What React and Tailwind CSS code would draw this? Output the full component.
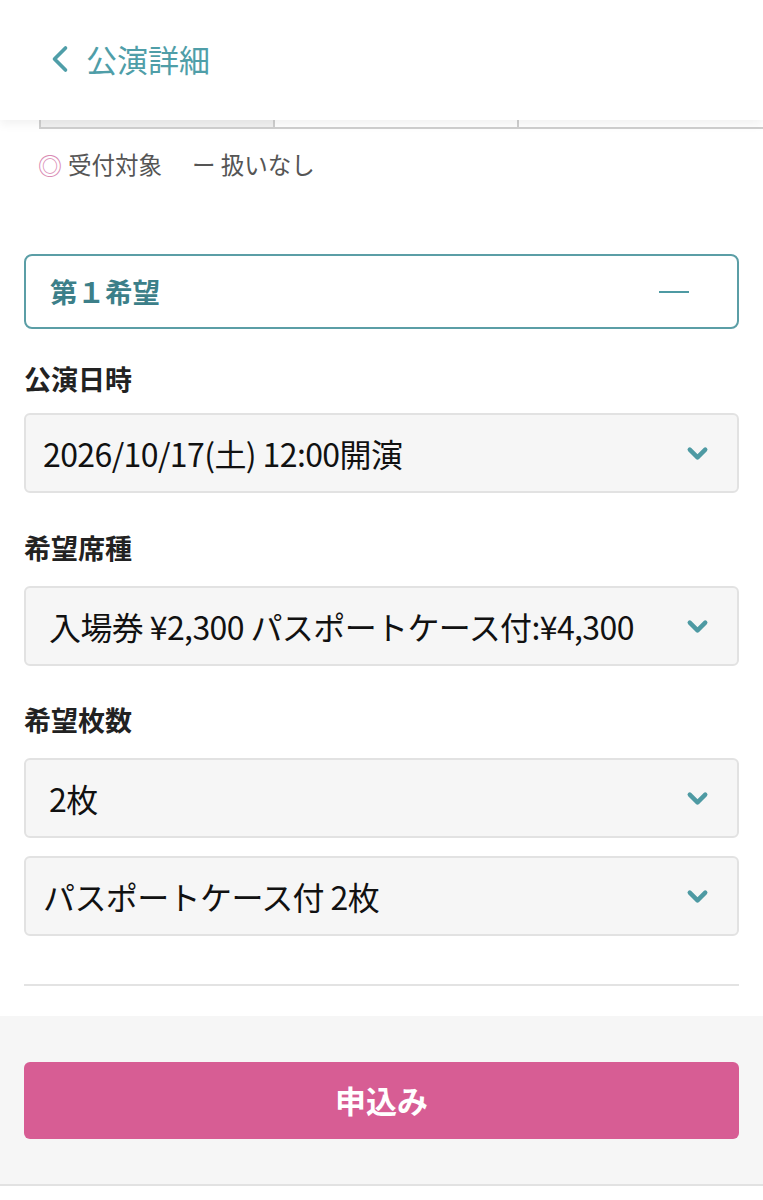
import { ChevronLeft, ChevronDown } from "lucide-react";

const font = { fontFamily: '"Noto Sans CJK JP", "Noto Sans", sans-serif' };

function Select({ value, pad = "pl-[17px]" }) {
  return (
    <div className={`h-[80px] rounded-md border-2 border-[#e2e2e2] bg-[#f6f6f6] flex items-center justify-between ${pad} pr-[24px]`}>
      <span className="text-[32px] text-[#111] tracking-[-0.6px]">{value}</span>
      <ChevronDown size={31} strokeWidth={3.4} className="text-[#4e9aa3]" />
    </div>
  );
}

function Label({ children }) {
  return <div className="text-[27px] font-bold text-[#222] leading-none">{children}</div>;
}

export default function App() {
  return (
    <div className="min-h-[1200px] bg-white" style={font}>
      {/* header */}
      <div className="relative z-10 h-[120px] bg-white shadow-[0_4px_10px_rgba(0,0,0,0.06)] flex items-center pl-[38px] pb-[2px]">
        <ChevronLeft size={44} strokeWidth={2} className="text-[#4f9ea8]" />
        <span className="ml-[4px] text-[31px] text-[#4f9ea8]">公演詳細</span>
      </div>

      {/* tail of the table above */}
      <div className="ml-[39px] h-[9px] grid grid-cols-[234px_244px_1fr] border-l-2 border-b-2 border-[#cfcfcf]">
        <div className="bg-[#f1f1f1] border-r-2 border-[#cfcfcf]" />
        <div className="border-r-2 border-[#cfcfcf]" />
        <div />
      </div>

      {/* legend */}
      <div className="pl-[38px] mt-[24px] flex items-center text-[23.5px] text-[#555] leading-none">
        <span className="text-[#d98ab3] text-[24px]">◎</span>
        <span className="ml-[6px]">受付対象</span>
        <span className="ml-[30px]">ー 扱いなし</span>
      </div>

      <div className="px-[24px]">
        {/* accordion header */}
        <div className="mt-[77px] h-[75px] rounded-lg border-2 border-[#5b9ea6] flex items-center justify-between pl-[24px] pr-[48px]">
          <span className="text-[27.5px] font-bold text-[#3c7f89]">第１希望</span>
          <span className="block w-[30px] h-[2px] bg-[#4e9aa3]" />
        </div>

        <div className="mt-[36px]">
          <Label>公演日時</Label>
        </div>
        <div className="mt-[21px]">
          <Select value="2026/10/17(土) 12:00開演" />
        </div>

        <div className="mt-[41px]">
          <Label>希望席種</Label>
        </div>
        <div className="mt-[25px]">
          <Select value="入場券 ¥2,300 パスポートケース付:¥4,300" pad="pl-[23px]" />
        </div>

        <div className="mt-[40px]">
          <Label>希望枚数</Label>
        </div>
        <div className="mt-[25px]">
          <Select value="2枚" pad="pl-[23px]" />
        </div>
        <div className="mt-[18px]">
          <Select value="パスポートケース付 2枚" />
        </div>

        <div className="mt-[48px] h-[2px] bg-[#e3e3e3]" />
      </div>

      {/* footer */}
      <div className="mt-[30px] bg-[#f6f6f6] border-b-2 border-[#e2e2e2] pt-[46px] pb-[45px] px-[24px]">
        <button className="w-full h-[77px] rounded-md bg-[#d75d94] text-white text-[31px] font-bold">
          申込み
        </button>
      </div>
    </div>
  );
}
